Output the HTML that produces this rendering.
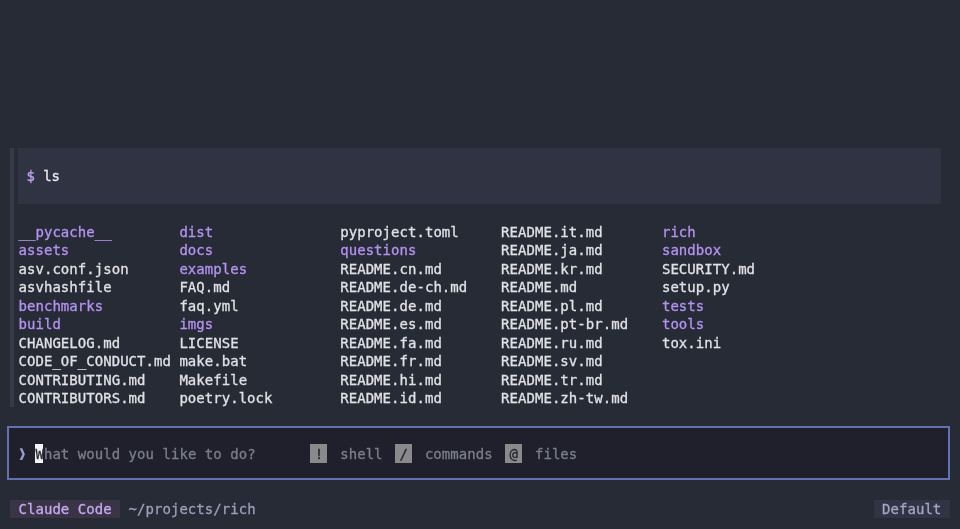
<!DOCTYPE html>
<html lang="en"><head><meta charset="utf-8"><title>Claude Code</title>
<style>
html,body{margin:0;padding:0;background:#272b36;}
body{width:960px;height:529px;position:relative;overflow:hidden;font-family:"DejaVu Sans Mono", "Liberation Mono", monospace;font-size:14px;}
.t{position:absolute;white-space:pre;line-height:18.5px;height:18.5px;letter-spacing:0.04px;-webkit-text-stroke:0.3px currentColor;}
#w{position:absolute;left:0;top:0;width:960px;height:529px;will-change:transform;}
.r{position:absolute;box-sizing:content-box;}
</style></head><body><div id="w">
<div class="r" style="left:10px;top:148.0px;width:3.8px;height:258.5px;background:#383a49;"></div>
<div class="r" style="left:18.13px;top:148.0px;width:922.8px;height:55.5px;background:#303341;"></div>
<span class="t" style="left:27.0px;top:166.5px;color:#c2a3ee;margin-left:-0.4px;">$</span>
<span class="t" style="left:43.93px;top:166.5px;color:#ececf0;margin-left:-0.8px;">ls</span>
<span class="t" style="left:18.53px;top:222.6px;color:#b493f0;">__pycache__</span>
<span class="t" style="left:18.53px;top:240.5px;color:#b493f0;">assets</span>
<span class="t" style="left:18.53px;top:259.6px;color:#e1e1e5;">asv.conf.json</span>
<span class="t" style="left:18.53px;top:277.5px;color:#e1e1e5;">asvhashfile</span>
<span class="t" style="left:18.53px;top:296.6px;color:#b493f0;">benchmarks</span>
<span class="t" style="left:18.53px;top:314.5px;color:#b493f0;">build</span>
<span class="t" style="left:18.53px;top:333.6px;color:#e1e1e5;">CHANGELOG.md</span>
<span class="t" style="left:18.53px;top:351.5px;color:#e1e1e5;">CODE_OF_CONDUCT.md</span>
<span class="t" style="left:18.53px;top:370.6px;color:#e1e1e5;">CONTRIBUTING.md</span>
<span class="t" style="left:18.53px;top:388.5px;color:#e1e1e5;">CONTRIBUTORS.md</span>
<span class="t" style="left:179.39px;top:222.6px;color:#b493f0;">dist</span>
<span class="t" style="left:179.39px;top:240.5px;color:#b493f0;">docs</span>
<span class="t" style="left:179.39px;top:259.6px;color:#b493f0;">examples</span>
<span class="t" style="left:179.39px;top:277.5px;color:#e1e1e5;">FAQ.md</span>
<span class="t" style="left:179.39px;top:296.6px;color:#e1e1e5;">faq.yml</span>
<span class="t" style="left:179.39px;top:314.5px;color:#b493f0;">imgs</span>
<span class="t" style="left:179.39px;top:333.6px;color:#e1e1e5;">LICENSE</span>
<span class="t" style="left:179.39px;top:351.5px;color:#e1e1e5;">make.bat</span>
<span class="t" style="left:179.39px;top:370.6px;color:#e1e1e5;">Makefile</span>
<span class="t" style="left:179.39px;top:388.5px;color:#e1e1e5;">poetry.lock</span>
<span class="t" style="left:340.24px;top:222.6px;color:#e1e1e5;">pyproject.toml</span>
<span class="t" style="left:340.24px;top:240.5px;color:#b493f0;">questions</span>
<span class="t" style="left:340.24px;top:259.6px;color:#e1e1e5;">README.cn.md</span>
<span class="t" style="left:340.24px;top:277.5px;color:#e1e1e5;">README.de-ch.md</span>
<span class="t" style="left:340.24px;top:296.6px;color:#e1e1e5;">README.de.md</span>
<span class="t" style="left:340.24px;top:314.5px;color:#e1e1e5;">README.es.md</span>
<span class="t" style="left:340.24px;top:333.6px;color:#e1e1e5;">README.fa.md</span>
<span class="t" style="left:340.24px;top:351.5px;color:#e1e1e5;">README.fr.md</span>
<span class="t" style="left:340.24px;top:370.6px;color:#e1e1e5;">README.hi.md</span>
<span class="t" style="left:340.24px;top:388.5px;color:#e1e1e5;">README.id.md</span>
<span class="t" style="left:501.09px;top:222.6px;color:#e1e1e5;">README.it.md</span>
<span class="t" style="left:501.09px;top:240.5px;color:#e1e1e5;">README.ja.md</span>
<span class="t" style="left:501.09px;top:259.6px;color:#e1e1e5;">README.kr.md</span>
<span class="t" style="left:501.09px;top:277.5px;color:#e1e1e5;">README.md</span>
<span class="t" style="left:501.09px;top:296.6px;color:#e1e1e5;">README.pl.md</span>
<span class="t" style="left:501.09px;top:314.5px;color:#e1e1e5;">README.pt-br.md</span>
<span class="t" style="left:501.09px;top:333.6px;color:#e1e1e5;">README.ru.md</span>
<span class="t" style="left:501.09px;top:351.5px;color:#e1e1e5;">README.sv.md</span>
<span class="t" style="left:501.09px;top:370.6px;color:#e1e1e5;">README.tr.md</span>
<span class="t" style="left:501.09px;top:388.5px;color:#e1e1e5;">README.zh-tw.md</span>
<span class="t" style="left:661.95px;top:222.6px;color:#b493f0;">rich</span>
<span class="t" style="left:661.95px;top:240.5px;color:#b493f0;">sandbox</span>
<span class="t" style="left:661.95px;top:259.6px;color:#e1e1e5;">SECURITY.md</span>
<span class="t" style="left:661.95px;top:277.5px;color:#e1e1e5;">setup.py</span>
<span class="t" style="left:661.95px;top:296.6px;color:#b493f0;">tests</span>
<span class="t" style="left:661.95px;top:314.5px;color:#b493f0;">tools</span>
<span class="t" style="left:661.95px;top:333.6px;color:#e1e1e5;">tox.ini</span>
<div class="r" style="left:6.9px;top:425.9px;width:939.40px;height:50.40px;background:#1f202c;border-style:solid;border-color:#6372ae;border-width:2.5px 2.7px 2.5px 2.8px"></div>
<svg class="r" style="left:18px;top:444px" width="10" height="18.5" viewBox="0 0 10 18.5"><path d="M1.7 4.3 L4.3 4.3 L6.9 10.15 L4.3 16 L1.7 16 L4.3 10.15 Z" fill="#989ec9"/></svg>
<div class="r" style="left:35.0px;top:444.2px;width:8.45px;height:18.65px;background:#f4f4f6;"></div>
<span class="t" style="left:35.46px;top:444.6px;color:#2c2d36;">W</span>
<span class="t" style="left:43.93px;top:444.6px;color:#7c7e8a;">hat would you like to do?</span>
<div class="r" style="left:310.213px;top:444.2px;width:16.93px;height:18.5px;background:#8a8a8d;"></div>
<span class="t" style="left:314.84px;top:444.6px;color:#25262f;">!</span>
<span class="t" style="left:340.24px;top:444.6px;color:#7c7e8a;">shell</span>
<div class="r" style="left:394.873px;top:444.2px;width:16.93px;height:18.5px;background:#8a8a8d;"></div>
<span class="t" style="left:399.5px;top:444.6px;color:#25262f;">/</span>
<span class="t" style="left:424.9px;top:444.6px;color:#7c7e8a;">commands</span>
<div class="r" style="left:504.923px;top:444.2px;width:16.94px;height:18.5px;background:#8a8a8d;"></div>
<span class="t" style="left:509.56px;top:444.6px;color:#25262f;">@</span>
<span class="t" style="left:534.96px;top:444.6px;color:#7c7e8a;">files</span>
<div class="r" style="left:9.5px;top:500.0px;width:110.4px;height:18.3px;background:#3a3447;"></div>
<span class="t" style="left:18.53px;top:499.5px;color:#c6a8ee;">Claude Code</span>
<span class="t" style="left:128.59px;top:499.5px;color:#9c9fbb;">~/projects/rich</span>
<div class="r" style="left:873.5px;top:500.0px;width:76.3px;height:17.7px;background:#303445;"></div>
<span class="t" style="left:882.06px;top:499.5px;color:#a3a7c6;">Default</span>
</div></body></html>
